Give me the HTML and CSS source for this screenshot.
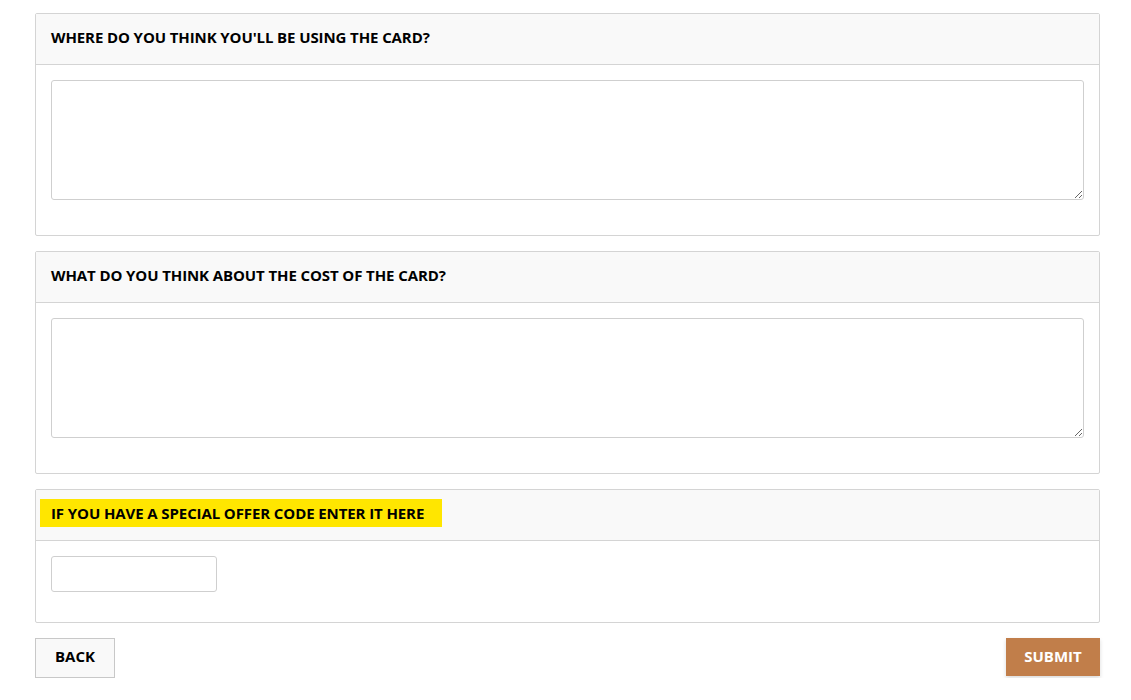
FILE: index.html
```html
<!DOCTYPE html>
<html>
<head>
<meta charset="utf-8">
<link rel="stylesheet" href="styles.css">
</head>
<body>
<div class="page">
  <div class="panel">
    <div class="panel-head"><span class="label">WHERE DO YOU THINK YOU'LL BE USING THE CARD?</span></div>
    <div class="panel-body"><textarea class="area"></textarea></div>
  </div>
  <div class="panel">
    <div class="panel-head"><span class="label">WHAT DO YOU THINK ABOUT THE COST OF THE CARD?</span></div>
    <div class="panel-body"><textarea class="area"></textarea></div>
  </div>
  <div class="panel">
    <div class="panel-head"><span class="label highlight">IF YOU HAVE A SPECIAL OFFER CODE ENTER IT HERE</span></div>
    <div class="panel-body"><input class="code" type="text"></div>
  </div>
  <div class="actions">
    <button class="btn back">BACK</button>
    <button class="btn submit">SUBMIT</button>
  </div>
</div>
</body>
</html>
```

FILE: styles.css
```css
html, body {
  margin: 0;
  padding: 0;
  background: #fff;
}
body {
  font-family: "Open Sans", "DejaVu Sans", sans-serif;
  color: #000;
}
.page {
  padding: 13px 31px 0 35px;
  display: flex;
  flex-direction: column;
  gap: 15px;
}
.panel {
  border: 1px solid #d4d4d4;
  border-radius: 2px;
  background: #fff;
}
.panel-head {
  background: #f9f9f9;
  border-bottom: 1px solid #d4d4d4;
  height: 46px;
  padding: 0 4px 4px 4px;
  display: flex;
  align-items: center;
}
.label {
  font-weight: 700;
  font-size: 15px;
  line-height: 28px;
  padding: 0 12px 0 11px;
  letter-spacing: -0.1px;
}
.highlight {
  background: #ffe600;
  padding-right: 18px;
}
.panel-body {
  padding: 15px 15px 30px 15px;
  display: flex;
}
.area {
  flex: 1;
  height: 120px;
  box-sizing: border-box;
  border: 1px solid #cfcfcf;
  border-radius: 3px;
  margin: 0 0 5px 0;
  resize: vertical;
  font-family: inherit;
}
.code {
  width: 166px;
  height: 36px;
  box-sizing: border-box;
  border: 1px solid #cfcfcf;
  border-radius: 3px;
  margin: 0;
}
.actions {
  display: flex;
  justify-content: space-between;
  align-items: flex-start;
}
.btn {
  font-family: "Open Sans", "DejaVu Sans", sans-serif;
  font-weight: 700;
  font-size: 15px;
  cursor: pointer;
  padding: 0 0 4px 0;
}
.back {
  width: 80px;
  height: 40px;
  background: #f9f9f9;
  border: 1px solid #c8c8c8;
  color: #000;
}
.submit {
  width: 94px;
  height: 38px;
  padding-bottom: 2px;
  background: #c17e4a;
  border: none;
  color: #fff;
  box-shadow: 0 2px 4px rgba(0,0,0,0.15);
}
```
